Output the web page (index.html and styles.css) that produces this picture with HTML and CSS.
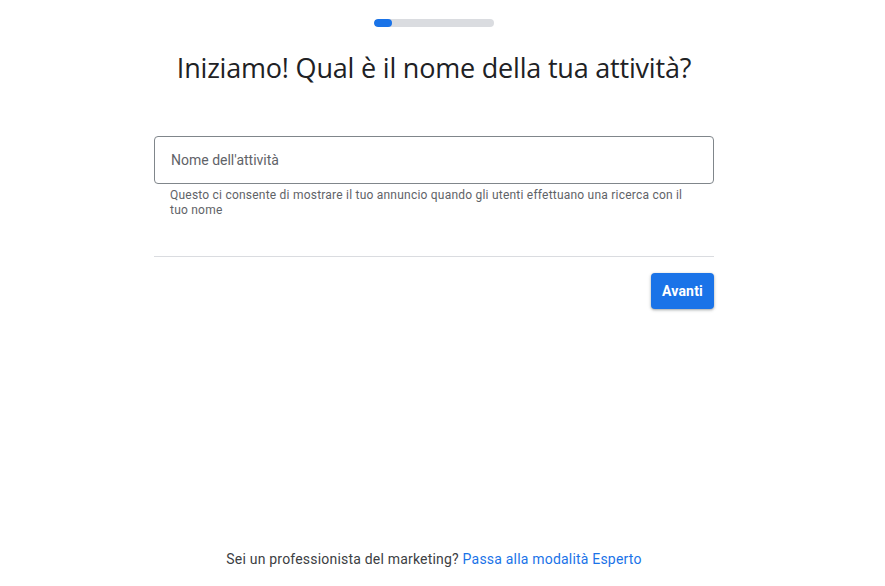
FILE: index.html
```html
<!DOCTYPE html>
<html lang="it">

<head>
    <meta charset="UTF-8" />
    <meta name="viewport" content="width=device-width, initial-scale=1.0" />
    <title>Google Ads - Nome attività</title>
    <link rel="stylesheet" href="styles.css">
</head>

<body>
    <div class="page">
        <div class="progress">
            <div class="progress-fill"></div>
        </div>

        <h1 class="title">Iniziamo! Qual è il nome della tua attività?</h1>

        <div class="form">
            <div class="field">
                <input type="text" class="field-input" placeholder="Nome dell'attività" />
            </div>
            <p class="hint">Questo ci consente di mostrare il tuo annuncio quando gli utenti effettuano una ricerca con il tuo nome</p>

            <div class="divider"></div>

            <div class="actions">
                <button class="next-btn">Avanti</button>
            </div>
        </div>

        <footer class="footer">
            Sei un professionista del marketing? <a href="#" class="expert-link">Passa alla modalità Esperto</a>
        </footer>
    </div>
</body>

</html>
```

FILE: styles.css
```css
* {
    box-sizing: border-box;
}

body {
    margin: 0;
    font-family: Roboto, Arial, sans-serif;
    color: #3c4043;
    background: #fff;
}

.page {
    width: 868px;
    min-height: 100vh;
    display: flex;
    flex-direction: column;
    align-items: center;
}

.progress {
    width: 120px;
    height: 8px;
    margin-top: 19px;
    border-radius: 4px;
    background: #dadce0;
    overflow: hidden;
}

.progress-fill {
    width: 18px;
    height: 100%;
    border-radius: 4px;
    background: #1a73e8;
}

.title {
    margin: 22px 0 0;
    font-family: "Open Sans", Roboto, sans-serif;
    font-size: 27px;
    font-weight: 400;
    color: #202124;
    letter-spacing: -0.2px;
}

.form {
    width: 560px;
    margin-top: 50px;
}

.field-input {
    width: 100%;
    height: 48px;
    padding: 0 16px;
    border: 1px solid #80868b;
    border-radius: 4px;
    font-family: Roboto, Arial, sans-serif;
    font-size: 14px;
    color: #202124;
    outline: none;
}

.field-input::placeholder {
    color: #5f6368;
}

.hint {
    margin: 4px 0 0;
    padding: 0 16px;
    font-size: 12px;
    line-height: 15px;
    letter-spacing: 0.22px;
    color: #5f6368;
}

.divider {
    height: 1px;
    margin-top: 38px;
    background: #dadce0;
}

.actions {
    display: flex;
    justify-content: flex-end;
    margin-top: 16px;
}

.next-btn {
    height: 36px;
    padding: 0 11px;
    border: none;
    border-radius: 4px;
    background: #1a73e8;
    color: #fff;
    font-family: Roboto, Arial, sans-serif;
    font-size: 14px;
    font-weight: 700;
    letter-spacing: 0.2px;
    cursor: pointer;
    box-shadow: 0 1px 2px rgba(60, 64, 67, 0.3), 0 1px 3px 1px rgba(60, 64, 67, 0.15);
}

.footer {
    margin-top: auto;
    padding-bottom: 19px;
    font-size: 14px;
    letter-spacing: 0.2px;
    color: #3c4043;
}

.expert-link {
    color: #1a73e8;
    text-decoration: none;
}
```
